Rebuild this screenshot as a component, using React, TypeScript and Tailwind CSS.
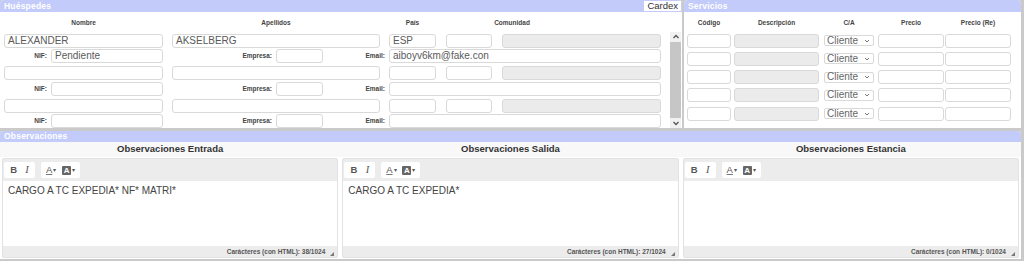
const inp = "h-[14px] rounded-[3px] border border-[#d9d9d9] bg-white text-[10px] text-[#5a5a5a] leading-[12px] px-[3px]";
const dis = "h-[14px] rounded-[3px] border border-[#d9d9d9] bg-[#ebebeb]";
const lbl = "text-[6.5px] font-bold text-[#444] text-right pr-[4px]";

type Guest = { nombre: string; apellidos: string; pais: string; nif: string; email: string };

const guests: Guest[] = [
  { nombre: "ALEXANDER", apellidos: "AKSELBERG", pais: "ESP", nif: "Pendiente", email: "aiboyv6km@fake.con" },
  { nombre: "", apellidos: "", pais: "", nif: "", email: "" },
  { nombre: "", apellidos: "", pais: "", nif: "", email: "" },
];

function GuestRow({ g }: { g: Guest }) {
  return (
    <div className="flex flex-col gap-[1.5px]">
      <div className="flex items-center">
        <div className={`${inp} w-[159px]`}>{g.nombre}</div>
        <div className={`${inp} w-[208px] ml-[9px]`}>{g.apellidos}</div>
        <div className={`${inp} w-[47px] ml-[9px]`}>{g.pais}</div>
        <div className={`${inp} w-[46px] ml-[10px]`}></div>
        <div className={`${dis} w-[159px] ml-[10px]`}></div>
      </div>
      <div className="flex items-center">
        <div className={`${lbl} w-[47px]`}>NIF:</div>
        <div className={`${inp} w-[112px]`}>{g.nif}</div>
        <div className={`${lbl} w-[113px]`}>Empresa:</div>
        <div className={`${inp} w-[47px]`}></div>
        <div className={`${lbl} w-[66px]`}>Email:</div>
        <div className={`${inp} w-[272px]`}>{g.email}</div>
      </div>
    </div>
  );
}

function Huespedes() {
  return (
    <div className="w-[682px] h-[128px] bg-white rounded-t-[4px] overflow-hidden flex flex-col">
      <div className="h-[12px] bg-[#c3cbfa] flex items-center justify-between pl-[4px] pr-[1px]">
        <span className="text-[8.5px] font-bold text-white tracking-[0.2px]">Huéspedes</span>
        <span className="h-[10px] bg-white px-[3px] text-[9.5px] leading-[10px] text-[#333]">Cardex</span>
      </div>
      <div className="flex items-center h-[18px] mt-[2px] text-[6.5px] font-bold text-[#444]">
        <div className="w-[159px] ml-[4px] text-center">Nombre</div>
        <div className="w-[208px] ml-[9px] text-center">Apellidos</div>
        <div className="w-[47px] ml-[9px] text-center">País</div>
        <div className="w-[100px] ml-[26px] text-center">Comunidad</div>
      </div>
      <div className="flex flex-1">
        <div className="flex flex-col gap-[3px] pl-[4px] pt-[2px] flex-1">
          {guests.map((g, i) => (
            <GuestRow key={i} g={g} />
          ))}
        </div>
        <div className="w-[11px] mr-[1px] bg-[#f1f1f1] flex flex-col items-center">
          <svg width="8" height="8" viewBox="0 0 8 8" className="mt-[1px]">
            <path d="M1.5 5 L4 2.5 L6.5 5" stroke="#555" strokeWidth="1.3" fill="none" />
          </svg>
          <div className="w-full flex-1 bg-[#c6c6c6] my-[1px]"></div>
          <svg width="8" height="8" viewBox="0 0 8 8" className="mb-[1px]">
            <path d="M1.5 3 L4 5.5 L6.5 3" stroke="#555" strokeWidth="1.3" fill="none" />
          </svg>
        </div>
      </div>
    </div>
  );
}

function Servicios() {
  return (
    <div className="w-[337px] h-[128px] bg-white rounded-t-[4px] overflow-hidden flex flex-col">
      <div className="h-[12px] bg-[#c3cbfa] flex items-center pl-[4px]">
        <span className="text-[8.5px] font-bold text-white tracking-[0.2px]">Servicios</span>
      </div>
      <div className="flex items-center h-[18px] mt-[2px] text-[6.5px] font-bold text-[#444] pl-[3px]">
        <div className="w-[44px] text-center">Código</div>
        <div className="w-[85px] ml-[3px] text-center">Descripción</div>
        <div className="w-[50px] ml-[5px] text-center">C/A</div>
        <div className="w-[66px] ml-[4px] text-center">Precio</div>
        <div className="w-[66px] ml-[1px] text-center">Precio (Re)</div>
      </div>
      <div className="flex flex-col gap-[4.3px] pl-[3px] pt-[1.5px]">
        {[0, 1, 2, 3, 4].map((i) => (
          <div key={i} className="flex items-center">
            <div className={`${inp} w-[44px] h-[13px]`}></div>
            <div className={`${dis} w-[85px] h-[13px] ml-[3px]`}></div>
            <div className="w-[50px] h-[11px] ml-[5px] border border-[#d9d9d9] rounded-[2px] bg-white flex items-center justify-between pl-[2px] pr-[3px]">
              <span className="text-[10px] leading-[10px] text-[#666]">Cliente</span>
              <svg width="6" height="6" viewBox="0 0 6 6">
                <path d="M1 2 L3 4 L5 2" stroke="#666" strokeWidth="0.9" fill="none" />
              </svg>
            </div>
            <div className={`${inp} w-[66px] h-[13px] ml-[4px]`}></div>
            <div className={`${inp} w-[66px] h-[13px] ml-[1px]`}></div>
          </div>
        ))}
      </div>
    </div>
  );
}

function Editor({ title, text, count }: { title: string; text: string; count: number }) {
  return (
    <div className="flex flex-col flex-1">
      <div className="h-[15px] flex items-center justify-center text-[9.5px] font-bold text-[#333] bg-[#f8f8f8]">
        {title}
      </div>
      <div className="mx-[2px] mt-[1px] flex-1 bg-[#ececec] rounded-[2px] border border-[#e2e2e2] flex flex-col">
        <div className="h-[22px] flex items-center gap-[6px] px-[1px]">
          <div className="h-[16px] w-[31px] bg-white rounded-[2px] flex items-center justify-around px-[2px] text-[9.5px] text-[#555]">
            <span className="font-bold">B</span>
            <span className="italic font-['Liberation_Serif'] text-[10.5px]">I</span>
          </div>
          <div className="h-[16px] w-[39px] bg-white rounded-[2px] flex items-center justify-around px-[2px] text-[9.5px] text-[#555]">
            <span className="flex items-center">
              <span className="underline decoration-[#777]">A</span>
              <span className="text-[6px] ml-[1px]">▾</span>
            </span>
            <span className="flex items-center">
              <span className="w-[9px] h-[9px] bg-[#666] text-white text-[8px] leading-[9px] font-bold text-center rounded-[1px]">A</span>
              <span className="text-[6px] ml-[1px]">▾</span>
            </span>
          </div>
        </div>
        <div className="h-[65px] bg-white px-[5px] pt-[2px] text-[10px] text-[#444]">{text}</div>
        <div className="flex-1 flex items-center justify-end pr-[2px] text-[6.5px] font-bold text-[#555]">
          <span>Carácteres (con HTML): {count}/1024</span>
          <svg width="6" height="6" viewBox="0 0 6 6" className="ml-[4px] mt-[4px]">
            <path d="M5 1 L5 5 L1 5 Z" fill="#777" />
          </svg>
        </div>
      </div>
    </div>
  );
}

export default function App() {
  return (
    <div className="w-[1024px] h-[261px] bg-[#cacaca] font-['Liberation_Sans',Arial,sans-serif] overflow-hidden">
      <div className="flex gap-[2px]">
        <Huespedes />
        <Servicios />
      </div>
      <div className="mt-[3px] w-[1021px] h-[128px] bg-white rounded-t-[4px] overflow-hidden flex flex-col">
        <div className="h-[11px] bg-[#c3cbfa] flex items-center pl-[4px]">
          <span className="text-[8.5px] font-bold text-white tracking-[0.2px]">Observaciones</span>
        </div>
        <div className="flex flex-1 pb-[1px]">
          <Editor title="Observaciones Entrada" text="CARGO A TC EXPEDIA* NF* MATRI*" count={38} />
          <Editor title="Observaciones Salida" text="CARGO A TC EXPEDIA*" count={27} />
          <Editor title="Observaciones Estancia" text="" count={0} />
        </div>
      </div>
    </div>
  );
}
